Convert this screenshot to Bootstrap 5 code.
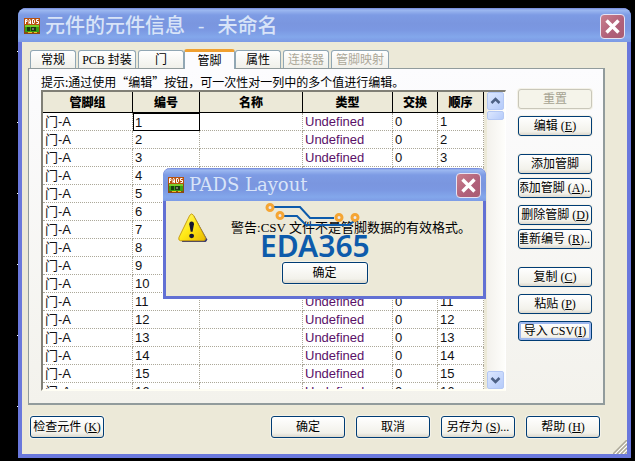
<!DOCTYPE html>
<html lang="zh-CN">
<head>
<meta charset="utf-8">
<meta name="viewport" content="width=device-width, initial-scale=1">
<title>元件的元件信息 - 未命名</title>
<link href="https://cdn.jsdelivr.net/npm/bootstrap@5.3.0/dist/css/bootstrap.min.css" rel="stylesheet">
<style>
:root { --ui: "Liberation Serif", "Noto Sans CJK SC", serif; --beige: #ece9d8; }
body { background: #000 linear-gradient(#fff 1px, transparent 1px) 17px 51px / 1px 71px repeat-y; font: 12px/16px var(--ui); color: #000; }
.xp-window { margin: 8px 4px 3px 18px; height: calc(100vh - 11px); min-height: 420px; background: var(--beige); border: 4px solid #6a78dc; border-top: 0; border-radius: 8px 8px 0 0; }
.xp-title { height: 34px; margin: 0 -4px; padding: 2px 6px 0 6px; gap: 5px; border-radius: 8px 8px 0 0; background: linear-gradient(#7084d8 0, #9db9f1 2px, #7d9be4 7px, #7a96df 16px, #7b98e2 22px, #83a7eb 29px, #7c99e4 34px); color: #d8e4f8; }
.title-text { font: 500 20px/30px "Noto Sans CJK SC", sans-serif; white-space: nowrap; }
.title-latin { font: 18px/30px "Liberation Mono", monospace; white-space: pre; }
.alert-title { font: 18px/30px "DejaVu Serif", serif; white-space: nowrap; }
.xp-close { width: 25px; height: 25px; padding: 0; border: 1px solid #e6e4f4; border-radius: 4px; background: linear-gradient(135deg, #c97f8c, #b0607a 60%, #a95c72); line-height: 0; }
.client { padding: 7px 22px 16px 6px; min-height: 0; }
.tab-strip { padding-left: 2px; height: 19px; position: relative; z-index: 1; }
.xp-tab { height: 18px; flex: none; padding: 0; margin-right: 2px; border: 1px solid #91a7b4; border-bottom: 0; border-radius: 3px 3px 0 0; background: linear-gradient(#fff, #f0f0ea); font: 12px/16px var(--ui); color: #000; white-space: nowrap; }
.xp-tab:disabled { color: #aca899; }
.xp-tab.current { height: 20px; margin: 0 0 -1px; border-top: 3px solid #f0a030; background: #fcfcfe; }
.tab-s { width: 46px; } .tab-m { width: 51px; } .tab-l { width: 58px; }
.pane { border: 1px solid #919b9c; border-right-width: 2px; border-bottom-width: 2px; background: linear-gradient(#fcfcfe, #f3f2ec); padding: 4px 11px 12px 12px; min-height: 0; }
.pane-main { min-height: 0; min-width: 0; }
.hint { font-family: "Noto Sans CJK SC", sans-serif; white-space: nowrap; line-height: 17px; }
.grid-frame { border: 2px solid #807f76; border-right: 1px solid #fff; border-bottom: 2px solid #fffef4; background: #fff; min-height: 0; overflow: hidden; }
.grid-scroll { overflow: hidden; border-right: 3px solid var(--beige); min-width: 0; }
.pins { table-layout: fixed; width: 100%; border-collapse: separate; border-spacing: 0; }
.pins th { height: 21px; padding: 0; background: var(--beige); border-right: 1px solid #000; border-bottom: 1px solid #000; text-align: center; font: 900 12px/18px "Noto Sans CJK SC", sans-serif; }
.pins td { height: 18px; padding: 0 2px; border-right: 1px dotted #aca899; border-bottom: 1px dotted #aca899; font: 13px/17px "Liberation Sans", "Noto Sans CJK SC", sans-serif; white-space: nowrap; color: #101014; }
.pins td:nth-child(4) { color: #5a1068; }
.pins td.cell-focus { border: 1px solid #000; padding-left: 1px; line-height: 15px; }
.c-group { width: 90px; } .c-no { width: 67px; } .c-type { width: 90px; } .c-swap { width: 45px; } .c-seq { width: 46px; }
.bar { width: 18px; background: linear-gradient(90deg, #f3f1ec, #fefefb); }
.bar button { width: 17px; padding: 0; border: 1px solid #b4c8f4; border-radius: 2px; background: linear-gradient(135deg, #dce7fe, #b5cbfa); line-height: 0; }
.bar .step { height: 18px; } .bar .grip { height: 9px; margin-top: 1px; }
.side { width: 74px; margin: 16px 0 0 12px; }
.xp-btn { width: 74px; height: 20px; flex: none; padding: 0 1px; border: 1px solid #003c74; border-radius: 3px; background: linear-gradient(#fff, #f2f1ea 80%, #dcd8cd); color: #000; font: 12px/16px var(--ui); box-shadow: 0 0 0 1px #f4f2e8; }
.xp-btn span { display: flex; justify-content: center; overflow: hidden; white-space: pre; }
.xp-btn:disabled { border-color: #c9c7ba; background: #f5f4ea; color: #a6a392; }
.xp-btn.current { box-shadow: inset 0 0 0 2px #9db7ee; padding: 0 2px; }
.xp-btn.tall { height: 22px; line-height: 18px; }
.xp-btn.alert-ok { width: 86px; }
.gap-19 { margin-top: 18px; } .gap-8 { margin-top: 7px; } .gap-5 { margin-top: 4px; }
.footer-row { padding: 11px 5px 0 2px; }
.footer-actions { gap: 11px; }
.size-grip { position: absolute; right: 0; bottom: 0; }
.alert-box { position: absolute; left: 141px; top: 160px; width: 323px; background: var(--beige); border: 3px solid #6270d4; border-top: 0; border-radius: 7px 7px 0 0; }
.alert-box .xp-title { margin: 0 -3px; height: 33px; padding: 1px 5px 0 5px; }
.alert-body { position: relative; padding: 11px 12px 12px; }
.alert-msg { margin-left: 23px; white-space: nowrap; font-size: 13px; }
.logo-mark { position: absolute; left: 94px; top: 0; width: 112px; }
.logo-word { font: 600 30px/30px "Noto Sans", sans-serif; color: #0d5bab; margin-top: -6px; }
.alert-actions { padding-top: 18px; }
</style>
<script src="https://cdn.jsdelivr.net/npm/bootstrap@5.3.0/dist/js/bootstrap.bundle.min.js"></script>
</head>
<body>
<svg class="d-none" aria-hidden="true">
  <symbol id="pads" viewBox="0 0 16 16">
    <rect width="16" height="16" fill="#8a4a10"/><rect width="16" height="7" fill="#b8500c"/>
    <path d="M1.500 6V1.500h1.500v2H1.500M5 6V2.500l.5-1h.5l.5 1V6M5 4.500h1.500M8.500 1.500v4h1.500l.5-1v-2l-.5-1zM14.500 1.500h-2v2h2v2h-2" fill="none" stroke="#fff"/>
    <rect x="1" y="7" width="14" height="7" fill="#3aa010"/><rect x="1" y="7" width="14" height="2" fill="#78cc28"/>
    <path d="M3 9h3v4H3zM7 9h5v4H7z" fill="#183c10"/><path d="M8 10h2v2H8z" fill="#78746c"/><path d="M4 14h4v1H4zM10 14h3v1h-3z" fill="#f0c020"/>
  </symbol>
  <symbol id="cross" viewBox="0 0 23 23"><path d="M5.500 5.500l12 12M17.500 5.500l-12 12" stroke="#fff" stroke-width="3.400"/></symbol>
</svg>
<main class="xp-window d-flex flex-column position-relative">
  <header class="xp-title d-flex align-items-center flex-shrink-0">
    <svg width="16" height="16" aria-hidden="true"><use href="#pads"/></svg>
    <h1 class="title-text m-0 me-auto">元件的元件信息<span class="title-latin"> - </span>未命名</h1>
    <button class="xp-close" type="button" aria-label="关闭"><svg width="23" height="23"><use href="#cross"/></svg></button>
  </header>
  <div class="client d-flex flex-column flex-grow-1">
    <nav class="tab-strip d-flex align-items-end flex-shrink-0" role="tablist">
      <button class="xp-tab tab-s" type="button" role="tab">常规</button>
      <button class="xp-tab tab-l" type="button" role="tab">PCB 封装</button>
      <button class="xp-tab tab-s me-0" type="button" role="tab">门</button>
      <button class="xp-tab current tab-m" type="button" role="tab" aria-selected="true">管脚</button>
      <button class="xp-tab tab-s" type="button" role="tab">属性</button>
      <button class="xp-tab tab-s" type="button" role="tab" disabled>连接器</button>
      <button class="xp-tab tab-l" type="button" role="tab" disabled>管脚映射</button>
    </nav>
    <section class="pane d-flex flex-grow-1">
      <div class="pane-main d-flex flex-column flex-grow-1">
        <p class="hint m-0">提示:通过使用“编辑”按钮，可一次性对一列中的多个值进行编辑。</p>
        <div class="grid-frame d-flex flex-grow-1">
          <div class="grid-scroll flex-grow-1">
            <table class="pins">
              <colgroup><col class="c-group"><col class="c-no"><col><col class="c-type"><col class="c-swap"><col class="c-seq"></colgroup>
              <thead><tr><th>管脚组</th><th>编号</th><th>名称</th><th>类型</th><th>交换</th><th>顺序</th></tr></thead>
              <tbody>
                <tr><td>门-A</td><td class="cell-focus">1</td><td></td><td>Undefined</td><td>0</td><td>1</td></tr>
                <tr><td>门-A</td><td>2</td><td></td><td>Undefined</td><td>0</td><td>2</td></tr>
                <tr><td>门-A</td><td>3</td><td></td><td>Undefined</td><td>0</td><td>3</td></tr>
                <tr><td>门-A</td><td>4</td><td></td><td>Undefined</td><td>0</td><td>4</td></tr>
                <tr><td>门-A</td><td>5</td><td></td><td>Undefined</td><td>0</td><td>5</td></tr>
                <tr><td>门-A</td><td>6</td><td></td><td>Undefined</td><td>0</td><td>6</td></tr>
                <tr><td>门-A</td><td>7</td><td></td><td>Undefined</td><td>0</td><td>7</td></tr>
                <tr><td>门-A</td><td>8</td><td></td><td>Undefined</td><td>0</td><td>8</td></tr>
                <tr><td>门-A</td><td>9</td><td></td><td>Undefined</td><td>0</td><td>9</td></tr>
                <tr><td>门-A</td><td>10</td><td></td><td>Undefined</td><td>0</td><td>10</td></tr>
                <tr><td>门-A</td><td>11</td><td></td><td>Undefined</td><td>0</td><td>11</td></tr>
                <tr><td>门-A</td><td>12</td><td></td><td>Undefined</td><td>0</td><td>12</td></tr>
                <tr><td>门-A</td><td>13</td><td></td><td>Undefined</td><td>0</td><td>13</td></tr>
                <tr><td>门-A</td><td>14</td><td></td><td>Undefined</td><td>0</td><td>14</td></tr>
                <tr><td>门-A</td><td>15</td><td></td><td>Undefined</td><td>0</td><td>15</td></tr>
                <tr><td>门-A</td><td>16</td><td></td><td>Undefined</td><td>0</td><td>16</td></tr>
              </tbody>
            </table>
          </div>
          <div class="bar d-flex flex-column flex-shrink-0">
            <button class="step" type="button" aria-label="向上滚动"><svg width="15" height="16"><path d="M3.500 10l4-4 4 4" fill="none" stroke="#4d6185" stroke-width="2.500"/></svg></button>
            <button class="grip" type="button" aria-label="滚动块"></button>
            <button class="step mt-auto" type="button" aria-label="向下滚动"><svg width="15" height="16"><path d="M3.500 6l4 4 4-4" fill="none" stroke="#4d6185" stroke-width="2.500"/></svg></button>
          </div>
        </div>
      </div>
      <div class="side d-flex flex-column flex-shrink-0">
        <button class="xp-btn" type="button" disabled><span>重置</span></button>
        <button class="xp-btn gap-8" type="button"><span>编辑 (<u>E</u>)</span></button>
        <button class="xp-btn gap-19" type="button"><span>添加管脚</span></button>
        <button class="xp-btn gap-5" type="button"><span>添加管脚 (<u>A</u>)...</span></button>
        <button class="xp-btn gap-8" type="button"><span>删除管脚 (<u>D</u>)</span></button>
        <button class="xp-btn gap-5" type="button"><span>重新编号 (<u>R</u>)...</span></button>
        <button class="xp-btn gap-19" type="button"><span>复制 (<u>C</u>)</span></button>
        <button class="xp-btn gap-8" type="button"><span>粘贴 (<u>P</u>)</span></button>
        <button class="xp-btn gap-8 current" type="button"><span>导入 CSV(<u>I</u>)</span></button>
      </div>
    </section>
    <footer class="footer-row d-flex justify-content-between flex-shrink-0">
      <button class="xp-btn tall" type="button"><span>检查元件 (<u>K</u>)</span></button>
      <div class="footer-actions d-flex">
        <button class="xp-btn tall" type="button"><span>确定</span></button>
        <button class="xp-btn tall" type="button"><span>取消</span></button>
        <button class="xp-btn tall" type="button"><span>另存为 (<u>S</u>)...</span></button>
        <button class="xp-btn tall" type="button"><span>帮助 (<u>H</u>)</span></button>
      </div>
    </footer>
  </div>
  <svg class="size-grip" width="14" height="14" aria-hidden="true"><path d="M0 14L14 0M4 14L14 4M8 14l6-6M12 14l2-2" stroke="#aca899" stroke-width="1.500"/><path d="M2 14L14 2M6 14l8-8M10 14l4-4" stroke="#fff"/></svg>

  <div class="alert-box" role="alertdialog" aria-labelledby="alertTitle" aria-describedby="alertMsg">
    <div class="xp-title d-flex align-items-center">
      <svg width="16" height="16" aria-hidden="true"><use href="#pads"/></svg>
      <h2 class="alert-title m-0 me-auto" id="alertTitle">PADS Layout</h2>
      <button class="xp-close" type="button" aria-label="关闭"><svg width="23" height="23"><use href="#cross"/></svg></button>
    </div>
    <div class="alert-body">
      <div class="d-flex align-items-center">
        <svg width="32" height="32" viewBox="0 0 32 32" aria-hidden="true">
          <defs><linearGradient id="warn" x2="1" y2="1"><stop stop-color="#fffa80"/><stop offset=".5" stop-color="#ffe816"/><stop offset="1" stop-color="#e8b800"/></linearGradient></defs>
          <path d="M17 3L31 28q0 3-3 3H4z" fill="#3c3c70"/>
          <path d="M12.500 2.500q2-3 4 0L29 26q1 3-2 3.500H2.500Q0 29 1 26z" fill="url(#warn)" stroke="#c49a10"/>
          <path d="M12 12q0-3 2.500-3t2.500 3l-1.500 8h-2z" fill="#161630"/><ellipse cx="14.500" cy="24.500" rx="2.600" ry="2.300" fill="#161630"/>
        </svg>
        <div class="alert-msg" id="alertMsg">警告:CSV 文件不是管脚数据的有效格式。</div>
      </div>
      <div class="logo-mark">
        <svg class="d-block" width="112" height="36" viewBox="0 0 112 36" aria-hidden="true">
          <g fill="none" stroke="#0d5bab" stroke-width="2"><path d="M14 6h26l10 11h24M24 15h13l9 9h43l5-4"/></g>
          <g fill="#e9e9f0" stroke="#f5a533" stroke-width="3"><circle cx="10" cy="6.500" r="3"/><circle cx="20" cy="14.500" r="3"/><circle cx="79" cy="16.500" r="3"/><circle cx="95" cy="16.500" r="3"/></g>
        </svg>
        <div class="logo-word">EDA365</div>
      </div>
      <div class="alert-actions text-center position-relative"><button class="xp-btn tall alert-ok" type="button"><span>确定</span></button></div>
    </div>
  </div>
</main>
</body>
</html>
